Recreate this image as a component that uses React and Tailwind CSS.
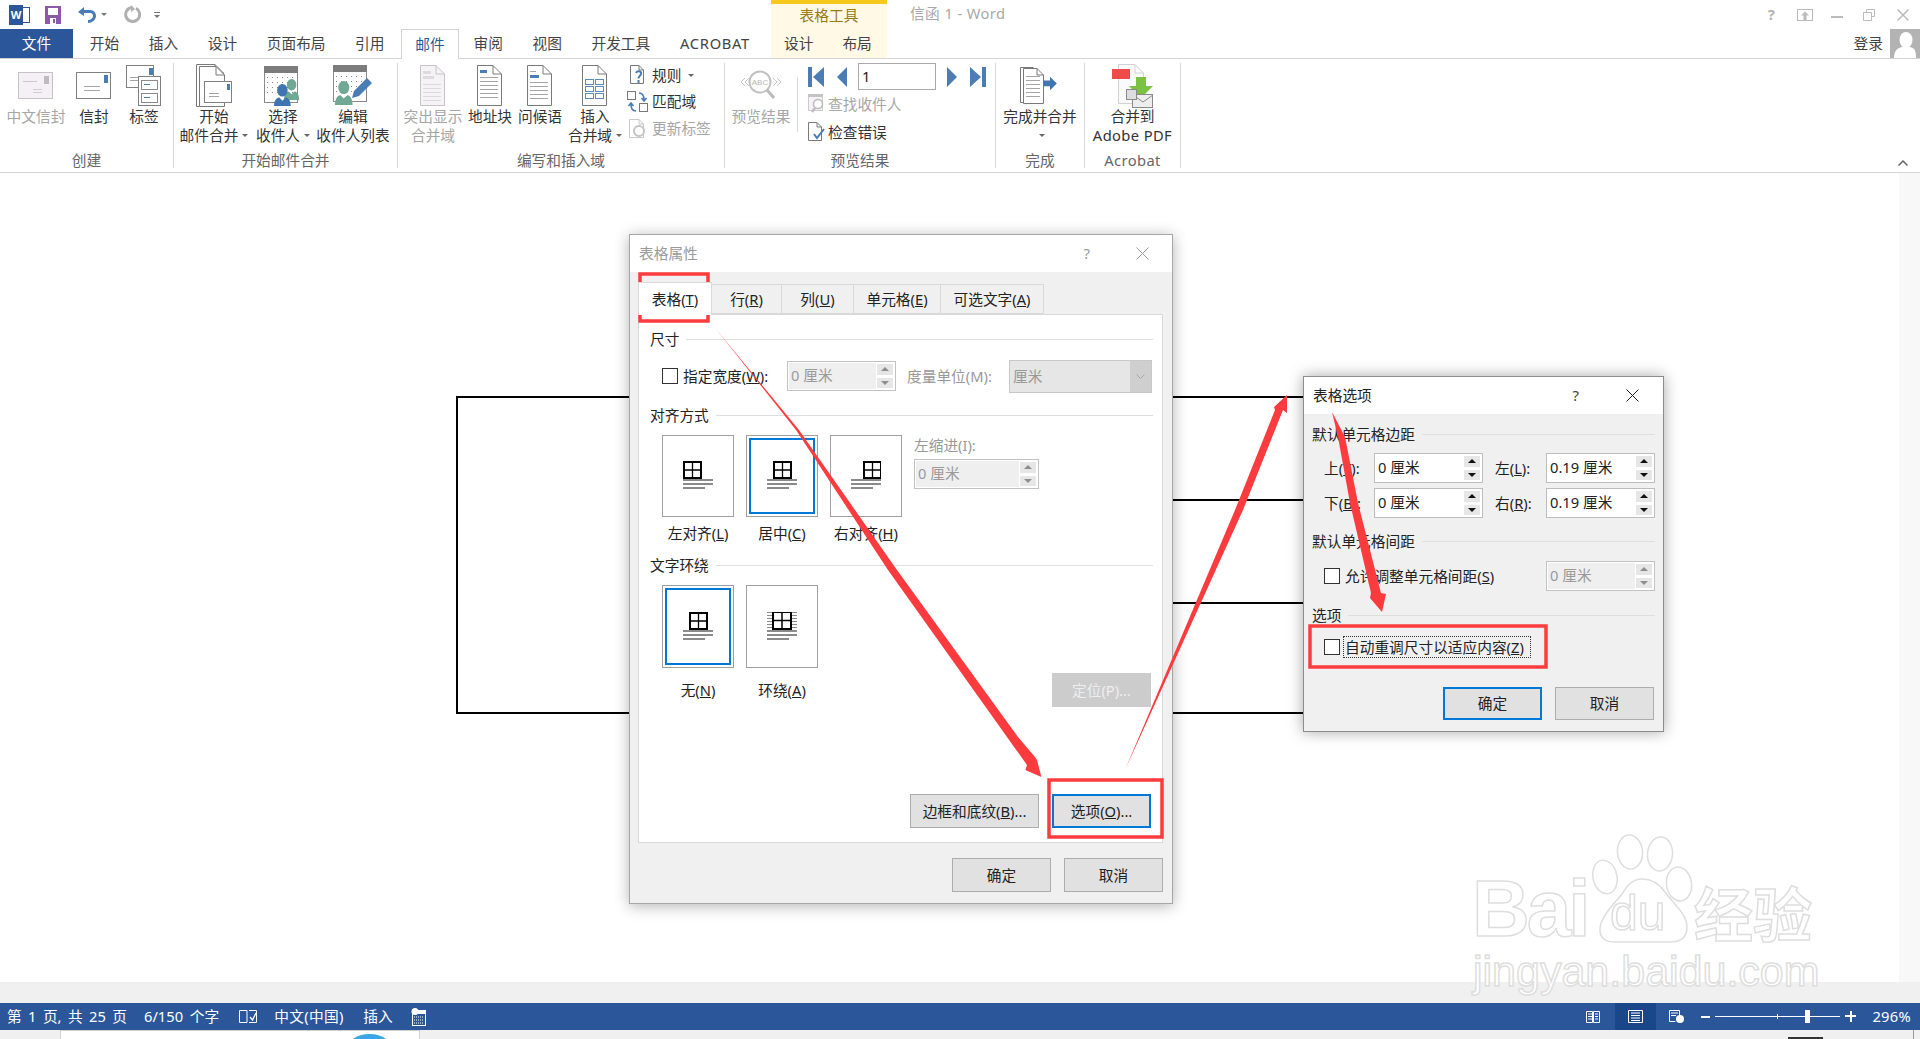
import React from "react";

const BLUE = "#4a7db5";
const GREEN = "#6fa894";

function Svg({ w, h, children, className = "" }) {
  return (
    <svg width={w} height={h} viewBox={`0 0 ${w} ${h}`} className={className} fill="none">
      {children}
    </svg>
  );
}

function Doc({ x = 0, y = 0, w = 25, h = 41, stroke = "#7a7a7a", fill = "#fff", fold = 9 }) {
  return (
    <g>
      <path d={`M${x + 0.5} ${y + 0.5}H${x + w - fold}L${x + w - 0.5} ${y + fold}V${y + h - 0.5}H${x + 0.5}Z`} fill={fill} stroke={stroke} />
      <path d={`M${x + w - fold} ${y + 0.5}V${y + fold}H${x + w - 0.5}`} stroke={stroke} />
    </g>
  );
}

function Lines({ x, y, w, n, gap = 4, color = "#a5a5a5" }) {
  return (
    <g>
      {Array.from({ length: n }).map((_, i) => (
        <rect key={i} x={x} y={y + i * gap} width={w} height="1" fill={color} />
      ))}
    </g>
  );
}

function Person({ x, y, c, s = 1 }) {
  return (
    <g fill={c} transform={`translate(${x} ${y}) scale(${s})`}>
      <ellipse cx="8" cy="5" rx="5" ry="6" />
      <path d="M0 21c0-7 3-9 5-9l3 3 3-3c2 0 5 2 5 9z" />
    </g>
  );
}

function Calendar() {
  return (
    <g>
      <rect x="0.5" y="0.5" width="33" height="36" fill="#fff" stroke="#8a8a8a" />
      <rect x="0" y="0" width="34" height="7" fill="#7c7c7c" />
      {[11, 16, 21, 26].map((yy) =>
        [3, 8, 13, 18, 23, 28].map((xx) => <rect key={`${xx}-${yy}`} x={xx} y={yy} width="1" height="1" fill="#888" />)
      )}
    </g>
  );
}

const icons = {
  cnEnvelope: (
    <Svg w={36} h={28}>
      <rect x="0.5" y="0.5" width="34" height="26" fill="#f4f0f5" stroke="#c4c4c4" />
      <rect x="26" y="4" width="5" height="8" fill="#bdbdbd" />
      <Lines x={5} y={9} w={14} n={1} color="#c9c9c9" />
      <Lines x={15} y={17} w={9} n={2} gap={3} color="#cfcfcf" />
    </Svg>
  ),
  envelope: (
    <Svg w={36} h={28}>
      <rect x="0.5" y="0.5" width="34" height="26" fill="#fff" stroke="#808080" />
      <rect x="28" y="3" width="4" height="8" fill={BLUE} />
      <Lines x={8} y={14} w={16} n={2} gap={4} />
    </Svg>
  ),
  label: (
    <Svg w={36} h={42}>
      <rect x="0.5" y="0.5" width="27" height="22" fill="#fff" stroke="#808080" />
      <rect x="23" y="3" width="4" height="7" fill={BLUE} />
      <Lines x={4} y={12} w={10} n={2} gap={3} />
      <rect x="12.5" y="11.5" width="22" height="29" fill="#fff" stroke="#808080" />
      <rect x="15.5" y="15.5" width="16" height="9" stroke="#8a8a8a" />
      <rect x="15.5" y="28.5" width="16" height="9" stroke="#8a8a8a" />
      <rect x="18" y="19" width="6" height="1" fill={BLUE} />
      <rect x="18" y="32" width="6" height="1" fill={BLUE} />
    </Svg>
  ),
  startMerge: (
    <Svg w={36} h={44}>
      <Doc x={0} y={0} w={28} h={43} fill="#fff" />
      <Doc x={3} y={2} w={26} h={41} fill="#fff" fold={9} />
      <rect x="8.5" y="17.5" width="27" height="21" fill="#fff" stroke="#808080" />
      <rect x="31" y="20" width="3" height="6" fill={BLUE} />
      <Lines x={13} y={29} w={10} n={2} gap={3} />
    </Svg>
  ),
  pickPeople: (
    <Svg w={38} h={40}>
      <Calendar />
      <Person x={20} y={14} c={GREEN} s={0.95} />
      <Person x={10} y={19} c="#3f76b1" s={1.05} />
    </Svg>
  ),
  editPeople: (
    <Svg w={40} h={42}>
      <Calendar />
      <Person x={2} y={17} c={GREEN} s={1.1} />
      <path d="M22 34l2-7 13-13 5 5-13 13z" fill={BLUE} transform="translate(-3 -1)" />
    </Svg>
  ),
  highlight: (
    <Svg w={26} h={42}>
      <Doc w={25} h={41} stroke="#c4c4c4" fill="#f6f3f7" />
      <rect x="3" y="6" width="8" height="3" fill="#dcdcdc" />
      <rect x="3" y="11" width="11" height="3" fill="#dcdcdc" />
      <Lines x={3} y={19} w={18} n={5} gap={4} color="#dadada" />
    </Svg>
  ),
  address: (
    <Svg w={26} h={42}>
      <Doc w={25} h={41} />
      <rect x="3" y="5" width="7" height="3" fill={BLUE} />
      <Lines x={3} y={12} w={18} n={6} gap={4} />
    </Svg>
  ),
  greeting: (
    <Svg w={26} h={42}>
      <Doc w={25} h={41} />
      <Lines x={3} y={6} w={6} n={1} />
      <rect x="3" y="10" width="9" height="3" fill={BLUE} />
      <Lines x={3} y={17} w={18} n={5} gap={4} />
    </Svg>
  ),
  insertField: (
    <Svg w={26} h={42}>
      <Doc w={25} h={41} />
      <g stroke="#5a8bc0">
        <rect x="3.5" y="14.5" width="8" height="5" />
        <rect x="13.5" y="14.5" width="8" height="5" />
        <rect x="3.5" y="21.5" width="8" height="5" />
        <rect x="13.5" y="21.5" width="8" height="5" />
        <rect x="3.5" y="28.5" width="8" height="5" />
        <rect x="13.5" y="28.5" width="8" height="5" />
      </g>
    </Svg>
  ),
  rules: (
    <Svg w={16} h={20}>
      <Doc w={14} h={19} fold={5} />
      <path d="M6 8c1-3 6-2 5 1-.5 2-2.500 2-2.500 4.500" stroke={BLUE} strokeWidth="2" fill="#fff" />
      <rect x="7.500" y="15" width="2" height="3" fill={BLUE} />
    </Svg>
  ),
  match: (
    <Svg w={22} h={22}>
      <rect x="0.500" y="0.500" width="8" height="8" fill="#fff" stroke="#777" />
      <rect x="12.500" y="12.500" width="8" height="8" fill="#fff" stroke="#777" />
      <path d="M12 2c4 0 5 3 5 7M14.500 7l2.500 3 2.500-3" stroke={BLUE} strokeWidth="1.600" />
      <path d="M9 20c-4 0-5-3-5-7M1.500 15l2.500-3 2.500 3" stroke={BLUE} strokeWidth="1.600" />
    </Svg>
  ),
  update: (
    <Svg w={18} h={20}>
      <Doc w={15} h={19} fold={5} stroke="#c8c8c8" />
      <circle cx="10" cy="12" r="5" stroke="#c4c4c4" strokeWidth="2" fill="#fff" />
    </Svg>
  ),
  preview: (
    <Svg w={42} h={34}>
      <path d="M5 9l-4 4 4 4M9 9l-4 4 4 4M33 9l4 4-4 4M37 9l4 4-4 4" stroke="#c6c6c6" />
      <circle cx="20" cy="13" r="10.500" fill="#fff" stroke="#c2c2c2" strokeWidth="2" />
      <text x="20" y="16" textAnchor="middle" fontSize="8" fill="#b5b5b5" fontFamily="Liberation Sans">ABC</text>
      <path d="M27 21l7 8" stroke="#bbb" strokeWidth="3" />
    </Svg>
  ),
  find: (
    <Svg w={18} h={20}>
      <rect x="0.500" y="0.500" width="14" height="16" fill="#f5f2f6" stroke="#ccc" />
      <rect width="15" height="3" fill="#c4c4c4" />
      <circle cx="10" cy="10" r="4.500" fill="#fff" stroke="#bdbdbd" strokeWidth="1.600" />
      <path d="M7 14l-3 4" stroke="#bdbdbd" strokeWidth="2.400" />
    </Svg>
  ),
  check: (
    <Svg w={18} h={20}>
      <Doc w={14} h={19} fold={5} />
      <path d="M6 12l3 4 7-9" stroke={BLUE} strokeWidth="2" />
    </Svg>
  ),
  finish: (
    <Svg w={40} h={38}>
      <Doc x={0} y={0} w={20} h={36} fold={7} />
      <Doc x={3} y={1} w={21} h={36} fold={7} />
      <Lines x={6} y={9} w={14} n={6} gap={4} />
      <path d="M26 15h7v-4l7 7-7 7v-4h-7z" fill="#3f76b1" transform="translate(-2 -1) scale(.97)" />
    </Svg>
  ),
  adobe: (
    <Svg w={42} h={44}>
      <Doc x={6} y={0} w={26} h={40} stroke="#d2d2d2" fill="#fafafa" />
      <rect x="0" y="5" width="18" height="10" fill="#ef4b4b" />
      <path d="M24 13h10v9h7L29 34 17 22h7z" fill="#7bc242" />
      <rect x="20.500" y="30.500" width="20" height="13" fill="#eee" stroke="#8a8a8a" />
      <path d="M21 31l10 7 10-7" stroke="#8a8a8a" />
      <rect x="14.500" y="25.500" width="10" height="10" fill="#ddd" stroke="#8a8a8a" />
    </Svg>
  ),
};

function Big({ w, icon, a, b, caret, gray }) {
  return (
    <div className={`flex flex-col items-center shrink-0 pt-[3px] ${gray ? "text-[#a6a6a6]" : "text-[#333]"}`} style={{ width: w }}>
      <div className="h-[39px] flex items-center justify-center">{icons[icon]}</div>
      <div className="mt-[2px] leading-[19px] whitespace-nowrap text-center">{a}</div>
      {b && (
        <div className="leading-[19px] whitespace-nowrap text-center flex items-center">
          {b}
          {caret && <Caret />}
        </div>
      )}
      {!b && caret && <div className="leading-[19px] h-[19px] flex items-center"><Caret /></div>}
    </div>
  );
}

function Caret() {
  return <span className="ml-[4px] w-0 h-0 border-x-[3px] border-x-transparent border-t-[3px] border-t-[#666] inline-block" />;
}

function Group({ w, label, children }) {
  return (
    <div className="mt-[4px] h-[105px] border-r border-[#d8d8d8] flex flex-col shrink-0" style={{ width: w }}>
      <div className="h-[87px] flex">{children}</div>
      <div className="h-[18px] leading-[20px] text-center text-[#666] whitespace-nowrap">{label}</div>
    </div>
  );
}

function Small({ icon, gray, children, caret, h }) {
  return (
    <div className={`flex items-center gap-[3px] whitespace-nowrap ${gray ? "text-[#a6a6a6]" : "text-[#333]"}`} style={{ height: h }}>
      <span className="w-[22px] flex justify-center">{icons[icon]}</span>
      {children}
      {caret && <Caret />}
    </div>
  );
}

function Ribbon() {
  return (
    <div className="h-[114px] flex border-b border-[#d4d4d4] bg-white">
      <Group w={174} label="创建">
        <div className="w-[6px] shrink-0" />
        <Big w={60} icon="cnEnvelope" a="中文信封" gray />
        <Big w={56} icon="envelope" a="信封" />
        <Big w={44} icon="label" a="标签" />
      </Group>
      <Group w={224} label="开始邮件合并">
        <Big w={80} icon="startMerge" a="开始" b="邮件合并" caret />
        <Big w={58} icon="pickPeople" a="选择" b="收件人" caret />
        <Big w={82} icon="editPeople" a="编辑" b="收件人列表" />
      </Group>
      <Group w={327} label="编写和插入域">
        <Big w={70} icon="highlight" a="突出显示" b="合并域" gray />
        <Big w={44} icon="address" a="地址块" />
        <Big w={56} icon="greeting" a="问候语" />
        <Big w={54} icon="insertField" a="插入" b="合并域" caret />
        <div className="ml-[5px] -mt-[1px]">
          <Small icon="rules" h={26} caret>规则</Small>
          <Small icon="match" h={27}>匹配域</Small>
          <Small icon="update" h={27} gray>更新标签</Small>
        </div>
      </Group>
      <Group w={271} label="预览结果">
        <Big w={72} icon="preview" a="预览结果" gray />
        <div className="w-px h-[55px] mt-[14px] bg-[#d8d8d8] shrink-0" />
        <div className="ml-[10px]">
          <div className="h-[27px] flex items-center">
            <Svg w={16} h={20}>
              <path d="M0 0h4v20H0zM16 0v20L5 10z" fill={BLUE} />
            </Svg>
            <Svg w={10} h={20} className="ml-[13px]">
              <path d="M10 0v20L0 10z" fill={BLUE} />
            </Svg>
            <div className="ml-[11px] w-[78px] h-[27px] border border-[#aaa] bg-white flex items-center pl-[3px] text-[#222]">1</div>
            <Svg w={10} h={20} className="ml-[11px]">
              <path d="M0 0v20l10-10z" fill={BLUE} />
            </Svg>
            <Svg w={16} h={20} className="ml-[13px]">
              <path d="M12 0h4v20h-4zM0 0v20l11-10z" fill={BLUE} />
            </Svg>
          </div>
          <div className="flex items-center h-[28px] text-[#a6a6a6] whitespace-nowrap gap-[2px]">
            <span className="w-[15px]">{icons.find}</span>
            <span className="ml-[3px]">查找收件人</span>
          </div>
          <div className="flex items-center h-[28px] text-[#333] whitespace-nowrap gap-[2px]">
            <span className="w-[15px]">{icons.check}</span>
            <span className="ml-[3px]">检查错误</span>
          </div>
        </div>
      </Group>
      <Group w={89} label="完成">
        <Big w={88} icon="finish" a="完成并合并" caret />
      </Group>
      <Group w={96} label={<span className="tracking-[0.4px]">Acrobat</span>}>
        <Big w={95} icon="adobe" a="合并到" b={<span className="tracking-[0.4px]">Adobe PDF</span>} />
      </Group>
      <div className="flex-1 flex justify-end items-end pb-[6px] pr-[12px]">
        <Svg w={10} h={6}>
          <path d="M0.500 5.500L5 1l4.500 4.500" stroke="#666" strokeWidth="1.500" />
        </Svg>
      </div>
    </div>
  );
}

function TopBar() {
  return (
    <div className="h-[29px] flex items-center bg-white">
      <div className="w-[771px] shrink-0 flex items-center h-full">
        <div className="ml-[9px] w-[21px] h-[20px] relative">
          <div className="absolute right-0 top-[2px] w-[17px] h-[16px] bg-white border border-[#2b579a]" />
          <div className="absolute left-0 top-0 w-[14px] h-[20px] bg-[#2b579a] flex items-center justify-center text-white text-[11px] font-bold leading-none">W</div>
        </div>
        <Svg w={16} h={18} className="ml-[15px]">
          <path d="M0 0h16v18H0z" fill="#8a5aa8" />
          <rect x="3" y="2" width="10" height="7" fill="#fff" />
          <rect x="5" y="12" width="6" height="6" fill="#fff" />
          <rect x="8" y="13" width="2" height="4" fill="#8a5aa8" />
        </Svg>
        <Svg w={20} h={18} className="ml-[16px]">
          <path d="M1 6l6-5v3h6c4 0 6 3 6 6s-3 7-8 7v-3c3 0 5-2 5-4s-1-3-3-3H7v3z" fill={BLUE} />
        </Svg>
        <span className="ml-[4px] w-0 h-0 border-x-[3px] border-x-transparent border-t-[3px] border-t-[#777]" />
        <Svg w={19} h={19} className="ml-[15px]">
          <path d="M10 2.500a7 7 0 1 0 4 .8" stroke="#b0b0b0" strokeWidth="3" />
          <path d="M9 0v7l4-3z" fill="#b0b0b0" />
        </Svg>
        <div className="ml-[13px] flex flex-col items-center gap-[2px]">
          <span className="w-[6px] h-px bg-[#777]" />
          <span className="w-0 h-0 border-x-[3px] border-x-transparent border-t-[3px] border-t-[#777]" />
        </div>
      </div>
      <div className="w-[116px] h-full shrink-0 bg-[#fff9e6] border-t-[4px] border-[#f6c91c] flex items-center justify-center text-[#9a7a14] pb-[3px]">表格工具</div>
      <div className="ml-[23px] text-[#a8a8a8] tracking-[0.4px] pb-[2px]">信函 1 - Word</div>
      <div className="flex-1" />
      <div className="flex items-center pr-[11px] text-[#b5b5b5]">
        <span className="text-[15px] font-bold mr-[22px]">?</span>
        <Svg w={16} h={12} className="mr-[18px]">
          <rect x="0.500" y="0.500" width="15" height="11" stroke="#bbb" />
          <path d="M8 2.500l-4 4h2.500V11h3V6.500H12z" fill="#bbb" />
        </Svg>
        <span className="w-[12px] h-[2px] bg-[#bbb] mt-[5px] mr-[20px]" />
        <Svg w={12} h={12} className="mr-[22px]">
          <path d="M3.500 3V.500h8v7H9M.500 3.500h8v8h-8z" stroke="#bbb" />
        </Svg>
        <Svg w={12} h={12}>
          <path d="M.500.500l11 11M11.500.500l-11 11" stroke="#bbb" strokeWidth="1.500" />
        </Svg>
      </div>
    </div>
  );
}

function TabRow() {
  const tabs = ["开始", "插入", "设计", "页面布局", "引用"];
  const rest = ["审阅", "视图", "开发工具"];
  return (
    <div className="h-[30px] flex items-stretch border-b border-[#d4d4d4] bg-white relative">
      <div className="w-[771px] shrink-0 flex items-stretch">
        <div className="w-[73px] bg-[#2b579a] text-white flex items-center justify-center">文件</div>
        <div className="w-[2px]" />
        {tabs.map((t) => (
          <div key={t} className="px-[14.800px] flex items-center text-[#444] whitespace-nowrap">{t}</div>
        ))}
        <div className="ml-[2px] px-[13px] h-[30px] border border-b-0 border-[#d4d4d4] bg-white flex items-center text-[#2b579a] z-10">邮件</div>
        {rest.map((t) => (
          <div key={t} className="px-[14.800px] flex items-center text-[#444] whitespace-nowrap">{t}</div>
        ))}
        <div className="px-[15px] flex items-center text-[#444] whitespace-nowrap tracking-[0.7px]">ACROBAT</div>
      </div>
      <div className="w-[116px] bg-[#fff9e6] flex items-center text-[#444]">
        <span className="ml-[13px]">设计</span>
        <span className="ml-[29px]">布局</span>
      </div>
      <div className="flex-1 flex justify-end items-center">
        <span className="text-[#444] mr-[7px]">登录</span>
        <div className="w-[30px] h-[29px] bg-[#b3b3b3] overflow-hidden flex justify-center">
          <Svg w={26} h={29}>
            <ellipse cx="14" cy="11" rx="6.500" ry="8" fill="#fff" />
            <path d="M2 29c0-7 3-10 8-11h8c5 1 6 4 6 11z" fill="#fff" />
          </Svg>
        </div>
      </div>
    </div>
  );
}

function Section({ children }) {
  return (
    <div className="h-[22px] flex items-center gap-[7px] text-[#222]">
      <span className="whitespace-nowrap">{children}</span>
      <span className="flex-1 h-px bg-[#dedede]" />
    </div>
  );
}

function Spinner({ w, h = 30, text, disabled }) {
  const arrow = disabled ? "#8d8d8d" : "#111";
  return (
    <div className={`relative flex border ${disabled ? "border-[#c2c2c2] bg-white" : "border-[#bdbdbd] bg-white"} p-[1px] shrink-0`} style={{ width: w, height: h }}>
      <div className={`flex-1 flex items-center pl-[2px] pb-[2px] whitespace-nowrap ${disabled ? "bg-[#efefef] text-[#9a9a9a]" : "text-[#222]"}`}>{text}</div>
      <div className="w-[18px] flex flex-col gap-[1px]">
        <div className="flex-1 bg-[#e6e6e6] border border-white flex items-center justify-center">
          <span className="w-0 h-0 border-x-[4px] border-x-transparent border-b-[4px]" style={{ borderBottomColor: arrow }} />
        </div>
        <div className="flex-1 bg-[#e6e6e6] border border-white flex items-center justify-center">
          <span className="w-0 h-0 border-x-[4px] border-x-transparent border-t-[4px]" style={{ borderTopColor: arrow }} />
        </div>
      </div>
    </div>
  );
}

function Btn({ w, h = 34, children, kind }) {
  const cls =
    kind === "primary"
      ? "border-2 border-[#0078d7] bg-[#e1e1e1] text-[#222]"
      : kind === "disabled"
      ? "border border-[#cccccc] bg-[#cccccc] text-[#eeeeee]"
      : "border border-[#adadad] bg-[#e1e1e1] text-[#222]";
  return (
    <div className={`flex items-center justify-center whitespace-nowrap shrink-0 ${cls}`} style={{ width: w, height: h }}>
      {children}
    </div>
  );
}

function Check() {
  return <span className="w-[16px] h-[16px] border border-[#333] bg-white shrink-0 inline-block" />;
}

function AlignGlyph({ pos }) {
  const tx = pos === "left" ? 0 : pos === "right" ? 12 : 6;
  if (pos === "wrap") {
    return (
      <Svg w={30} h={30}>
        <Lines x={0} y={0} w={30} n={6} gap={3} color="#8a8a8a" />
        <rect x="5" y="-1" width="20" height="19" fill="#fff" />
        <rect x="6" y="0" width="18" height="17" fill="#fff" stroke="#000" strokeWidth="2" />
        <path d="M15 0v17M6 8.500h18" stroke="#000" strokeWidth="1.500" />
        <rect x="0" y="18" width="30" height="2" fill="#8a8a8a" />
        <rect x="0" y="22" width="30" height="2" fill="#8a8a8a" />
        <rect x="0" y="26" width="22" height="2" fill="#8a8a8a" />
      </Svg>
    );
  }
  return (
    <Svg w={30} h={30}>
      <g transform={`translate(${tx} 0)`}>
        <rect x="1" y="1" width="17" height="16" fill="#fff" stroke="#000" strokeWidth="2" />
        <path d="M9.500 1v16M1 9h17" stroke="#000" strokeWidth="1.300" />
      </g>
      <rect x="0" y="18" width="30" height="2" fill="#8a8a8a" />
      <rect x="0" y="22" width="30" height="2" fill="#8a8a8a" />
      <rect x="0" y="26" width="22" height="2" fill="#8a8a8a" />
    </Svg>
  );
}

function Choice({ pos, selected, label, h, gap }) {
  return (
    <div className="w-[72px] flex flex-col items-center">
      <div className="w-[72px] border border-[#a0a0a0] bg-white p-[2px]" style={{ height: h }}>
        <div className={`w-full h-full flex items-center justify-center ${selected ? "border-2 border-[#0078d7]" : ""}`}>
          <AlignGlyph pos={pos} />
        </div>
      </div>
      <div className="h-[20px] leading-[20px] whitespace-nowrap text-[#222]" style={{ marginTop: gap }}>{label}</div>
    </div>
  );
}

function U({ c }) {
  return <>(<span className="underline">{c}</span>)</>;
}

function Close({ c = "#555" }) {
  return (
    <Svg w={13} h={13}>
      <path d="M.500.500l12 12M12.500.500l-12 12" stroke={c} strokeWidth="1" />
    </Svg>
  );
}

function TableProps() {
  const tabs = [
    [70, <>行<U c="R" /></>],
    [72, <>列<U c="U" /></>],
    [87, <>单元格<U c="E" /></>],
    [103, <>可选文字<U c="A" /></>],
  ];
  return (
    <div className="absolute left-[629px] top-[234px] w-[544px] h-[670px] bg-[#f0f0f0] border border-[#a6a6a6] shadow-[0_2px_14px_rgba(0,0,0,0.3)] flex flex-col">
      <div className="h-[37px] bg-white flex items-center pl-[9px] text-[#9a9a9a]">
        <span>表格属性</span>
        <span className="ml-auto text-[#9a9a9a] text-[15px]">?</span>
        <span className="ml-[46px] mr-[23px] flex"><Close c="#999" /></span>
      </div>
      <div className="ml-[8px] mt-[10px] h-[32px] flex items-end relative z-10">
        <div className="w-[74px] h-[33px] -mb-[1px] bg-white border border-b-0 border-[#d9d9d9] flex items-center justify-center text-[#222]">
          表格<U c="T" />
        </div>
        {tabs.map(([w, t], i) => (
          <div key={i} className="h-[30px] bg-[#f0f0f0] border border-l-0 border-[#d9d9d9] flex items-center justify-center text-[#222]" style={{ width: w }}>
            {t}
          </div>
        ))}
      </div>
      <div className="ml-[8px] mr-[9px] h-[529px] bg-white border border-[#d9d9d9] pt-[13px] pl-[11px] pr-[9px]">
        <Section>尺寸</Section>
        <div className="mt-[10px] h-[32px] flex items-center pl-[12px]">
          <Check />
          <span className="ml-[5px] w-[104px] whitespace-nowrap text-[#222]">指定宽度<span>(</span><span className="underline">W</span>):</span>
          <Spinner w={109} text="0 厘米" disabled />
          <span className="ml-[11px] w-[102px] whitespace-nowrap text-[#999]">度量单位(M):</span>
          <div className="w-[143px] h-[33px] bg-[#e6e6e6] border border-[#c8c8c8] flex items-center text-[#999]">
            <span className="pl-[3px] flex-1">厘米</span>
            <span className="w-[21px] h-full bg-[#cfcfcf] flex items-center justify-center">
              <Svg w={9} h={5}><path d="M.500.500l4 4 4-4" stroke="#aaa" /></Svg>
            </span>
          </div>
        </div>
        <div className="mt-[12px]"><Section>对齐方式</Section></div>
        <div className="mt-[9px] pl-[12px] flex gap-[12px]">
          <Choice pos="left" h={82} gap={6} label={<>左对齐<U c="L" /></>} />
          <Choice pos="center" selected h={82} gap={6} label={<>居中<U c="C" /></>} />
          <Choice pos="right" h={82} gap={6} label={<>右对齐<U c="H" /></>} />
          <div>
            <div className="h-[20px] leading-[20px] text-[#999] whitespace-nowrap">左缩进(I):</div>
            <div className="mt-[4px]"><Spinner w={125} text="0 厘米" disabled /></div>
          </div>
        </div>
        <div className="mt-[11px]"><Section>文字环绕</Section></div>
        <div className="mt-[9px] h-[122px] pl-[12px] pr-[2px] flex items-end justify-between">
          <div className="flex gap-[12px] self-start">
            <Choice pos="center" selected h={83} gap={12} label={<>无<U c="N" /></>} />
            <Choice pos="wrap" h={83} gap={12} label={<>环绕<U c="A" /></>} />
          </div>
          <Btn w={99} kind="disabled">定位(P)...</Btn>
        </div>
        <div className="mt-[87px] pr-[2px] flex justify-end gap-[13px]">
          <Btn w={129}>边框和底纹<U c="B" />...</Btn>
          <Btn w={99} kind="primary">选项<U c="O" />...</Btn>
        </div>
      </div>
      <div className="mt-[15px] flex justify-end gap-[13px] pr-[9px]">
        <Btn w={99}>确定</Btn>
        <Btn w={99}>取消</Btn>
      </div>
    </div>
  );
}

function OptionRow({ top, a, av, b, bv }) {
  return (
    <div className="flex items-center h-[30px] pl-[12px]" style={{ marginTop: top }}>
      <span className="w-[50px] whitespace-nowrap text-[#222]">{a}</span>
      <Spinner w={109} text={av} />
      <span className="ml-[12px] w-[51px] whitespace-nowrap text-[#222]">{b}</span>
      <Spinner w={109} text={bv} />
    </div>
  );
}

function TableOptions() {
  return (
    <div className="absolute left-[1303px] top-[376px] w-[361px] h-[356px] bg-[#f0f0f0] border border-[#8c8c8c] shadow-[0_0_14px_rgba(0,0,0,0.35)] flex flex-col">
      <div className="h-[37px] bg-white flex items-center pl-[9px] text-[#222]">
        <span>表格选项</span>
        <span className="ml-auto text-[15px] text-[#444]">?</span>
        <span className="ml-[47px] mr-[24px] flex"><Close c="#222" /></span>
      </div>
      <div className="px-[8px] pt-[9px]">
        <Section>默认单元格边距</Section>
        <OptionRow top={8} a={<>上<U c="T" />:</>} av="0 厘米" b={<>左<U c="L" />:</>} bv="0.19 厘米" />
        <OptionRow top={5} a={<>下<U c="B" />:</>} av="0 厘米" b={<>右<U c="R" />:</>} bv="0.19 厘米" />
        <div className="mt-[12px]"><Section>默认单元格间距</Section></div>
        <div className="mt-[9px] h-[30px] flex items-center pl-[12px]">
          <Check />
          <span className="ml-[5px] text-[#222] whitespace-nowrap">允许调整单元格间距<U c="S" /></span>
          <div className="ml-auto"><Spinner w={109} text="0 厘米" disabled /></div>
        </div>
        <div className="mt-[13px]"><Section>选项</Section></div>
        <div className="mt-[9px] h-[24px] flex items-center pl-[12px]">
          <Check />
          <span className="ml-[3px] w-[188px] h-[22px] px-[1px] border border-dotted border-[#333] flex items-center text-[#222] whitespace-nowrap">自动重调尺寸以适应内容<U c="Z" /></span>
        </div>
        <div className="mt-[28px] flex gap-[13px] justify-end pr-[1px]">
          <Btn w={99} h={33} kind="primary">确定</Btn>
          <Btn w={99} h={33}>取消</Btn>
        </div>
      </div>
    </div>
  );
}

function Annotations() {
  return (
    <svg className="absolute left-0 top-0 pointer-events-none" width="1920" height="1039" viewBox="0 0 1920 1039" fill="none">
      <rect x="640" y="274" width="68" height="47" stroke="#fb3b3e" strokeWidth="3.500" />
      <rect x="1049" y="780" width="113" height="57" stroke="#fb3b3e" strokeWidth="3.500" />
      <rect x="1310" y="626" width="236" height="41" stroke="#fb3b3e" strokeWidth="3.500" />
      <path d="M716 329L799 430L897 570L1018 737L1035 757L1037 760L1041.400 777L1025.400 770L1027 765L1007 737L888 570L796 430Z" fill="#fb3b3e" />
      <path d="M1125 770L1235 510L1275 410L1274 407L1287 395L1287 413L1283 410L1243 510Z" fill="#fb3b3e" />
      <path d="M1332 412L1345 437L1358 503L1381 593L1386 594L1382 612L1370 598L1371 593L1350 503L1338 437Z" fill="#fb3b3e" />
    </svg>
  );
}

function Watermark() {
  const stroke = "[-webkit-text-stroke:1.500px_#dedede] text-white absolute leading-none whitespace-nowrap [font-family:'Liberation_Sans',sans-serif]";
  return (
    <>
      <svg className="absolute left-[1590px] top-[830px]" width="110" height="120" viewBox="1590 830 110 120" fill="none">
        <g fill="#fff" stroke="#dedede" strokeWidth="1.500">
          <ellipse cx="1605" cy="877" rx="12" ry="17" transform="rotate(-12 1605 877)" />
          <ellipse cx="1630" cy="852" rx="12.500" ry="17" transform="rotate(-5 1630 852)" />
          <ellipse cx="1660" cy="854" rx="12.500" ry="17" transform="rotate(5 1660 854)" />
          <ellipse cx="1679" cy="884" rx="12.500" ry="17" transform="rotate(-8 1679 884)" />
          <path d="M1642 879c-10 0-15 7-20 15-4 6-21 21-22 34-1 10 6 14 14 14h56c10 0 17-4 17-15 0-13-15-25-22-35-5-7-12-13-23-13z" />
        </g>
      </svg>
      <div className={`${stroke} left-[1472px] top-[869px] text-[80px] font-bold tracking-[-3px]`}>Bai</div>
      <div className={`${stroke} left-[1610px] top-[888px] text-[50px]`}>du</div>
      <div className="[-webkit-text-stroke:1.500px_#dedede] text-white absolute leading-none whitespace-nowrap left-[1694px] top-[882px] text-[59px] font-bold [font-family:'Noto_Sans_CJK_SC',sans-serif]">经验</div>
      <div className={`${stroke} left-[1473px] top-[950px] text-[43px]`}>jingyan.baidu.com</div>
    </>
  );
}

function StatusBar() {
  return (
    <div className="h-[27px] bg-[#2b579a] text-white flex items-center">
      <span className="ml-[7px] [word-spacing:2.600px]">第 1 页, 共 25 页</span>
      <span className="ml-[17px] [word-spacing:3px]">6/150 个字</span>
      <Svg w={18} h={15} className="ml-[20px]">
        <path d="M8 1.500H.500v12H8V1.500zM10 1.500h7.500v12H10" stroke="#fff" />
        <path d="M11 8l2.500 3L17 4" stroke="#fff" strokeWidth="1.300" />
      </Svg>
      <span className="ml-[17px] w-[71px] whitespace-nowrap tracking-[0.3px]">中文(中国)</span>
      <span className="ml-[18px]">插入</span>
      <Svg w={15} h={18} className="ml-[18px]">
        <circle cx="4" cy="3.500" r="3.500" fill="#fff" />
        <rect x="1.500" y="4.500" width="13" height="13" stroke="#fff" />
        <rect x="7" y="2" width="8" height="4" fill="#fff" />
        <path d="M3 9h10M3 12h10M3 15h10" stroke="#fff" strokeDasharray="1 1" />
      </Svg>
      <div className="flex-1" />
      <Svg w={14} h={14} className="mr-[15px]">
        <path d="M.500 1.500h6v11h-6zM7.500 1.500h6v11h-6zM2 4h4M2 6.500h4M2 9h4M9 4h3M9 6.500h3M9 9h3" stroke="#fff" />
      </Svg>
      <div className="w-[41px] h-[27px] bg-[#19478a] flex items-center justify-center">
        <Svg w={15} h={13}>
          <path d="M.500.500h14v12H.500zM3 3h9M3 5.500h9M3 8h9M3 10.500h9" stroke="#fff" />
        </Svg>
      </div>
      <Svg w={15} h={13} className="ml-[13px]">
        <path d="M.500.500h10v9M2 3h7M2 5.500h5M.500.500v11h6" stroke="#fff" />
        <circle cx="11" cy="9" r="4" fill="#fff" />
      </Svg>
      <span className="ml-[17px] w-[9px] h-[2px] bg-white" />
      <div className="ml-[5px] w-[125px] h-px bg-white relative">
        <span className="absolute left-[62px] -top-[2px] w-px h-[5px] bg-white" />
        <span className="absolute left-[90px] -top-[6px] w-[5px] h-[13px] bg-white" />
      </div>
      <span className="ml-[5px] w-[11px] h-[11px] relative">
        <span className="absolute left-0 top-[4px] w-[11px] h-[2px] bg-white" />
        <span className="absolute left-[4.500px] top-0 w-[2px] h-[11px] bg-white" />
      </span>
      <span className="ml-[16px] mr-[9px] tracking-[0.3px]">296%</span>
    </div>
  );
}

export default function App() {
  return (
    <div className="relative w-[1920px] h-[1039px] overflow-hidden bg-white flex flex-col text-[14.700px] leading-tight [font-family:'Noto_Sans','Noto_Sans_CJK_SC',sans-serif]">
      <TopBar />
      <TabRow />
      <Ribbon />
      <div className="flex-1 flex min-h-0">
        <div className="flex-1 bg-white pt-[223px] pl-[456px]">
          <div className="w-[1050px] h-[318px] border-2 border-black flex">
            <div className="w-[500px] border-r-2 border-black" />
            <div className="flex-1 flex flex-col">
              <div className="h-[103px] border-b-2 border-black" />
              <div className="h-[103px] border-b-2 border-black" />
              <div className="flex-1" />
            </div>
          </div>
        </div>
        <div className="w-[21px] bg-[#f8f8f8]" />
      </div>
      <div className="h-[21px] bg-[#f0f0f0] shrink-0" />
      <StatusBar />
      <div className="h-[9px] bg-[#f0f0f0] shrink-0 overflow-hidden flex">
        <div className="ml-[60px] w-[360px] h-[9px] bg-white border-x border-t border-[#d0d0d0]">
          <div className="ml-[285px] mt-[3px] w-[47px] h-[34px] rounded-[50%] bg-[#3aa6e6]" />
        </div>
        <div className="ml-[1368px] mt-[7px] w-[35px] h-[2px] bg-[#333]" />
        <div className="ml-[90px] w-px h-[9px] bg-[#999]" />
      </div>
      <Watermark />
      <TableProps />
      <TableOptions />
      <Annotations />
    </div>
  );
}
